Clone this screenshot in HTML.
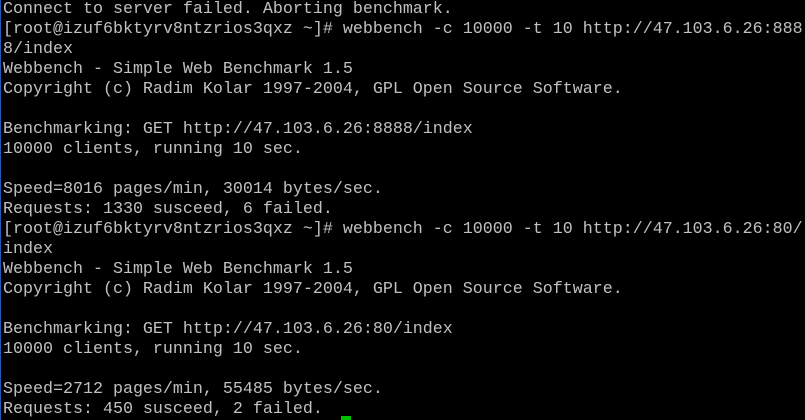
<!DOCTYPE html>
<html><head><style>
html,body{margin:0;padding:0;background:#000;width:805px;height:420px;overflow:hidden}
pre{margin:0;position:absolute;left:3px;top:0px;font-family:"Liberation Mono",monospace;font-size:16.67px;line-height:20px;color:#c0c0c0;white-space:pre}
.edge{position:absolute;left:0;top:0;width:1px;height:420px;background:#1a5fb4}
.cur{position:absolute;left:341px;top:416px;width:10px;height:4px;background:#00c000}
</style></head><body>
<div class="edge"></div>
<pre>Connect to server failed. Aborting benchmark.
[root@izuf6bktyrv8ntzrios3qxz ~]# webbench -c 10000 -t 10 http://47.103.6.26:888
8/index
Webbench - Simple Web Benchmark 1.5
Copyright (c) Radim Kolar 1997-2004, GPL Open Source Software.

Benchmarking: GET http://47.103.6.26:8888/index
10000 clients, running 10 sec.

Speed=8016 pages/min, 30014 bytes/sec.
Requests: 1330 susceed, 6 failed.
[root@izuf6bktyrv8ntzrios3qxz ~]# webbench -c 10000 -t 10 http://47.103.6.26:80/
index
Webbench - Simple Web Benchmark 1.5
Copyright (c) Radim Kolar 1997-2004, GPL Open Source Software.

Benchmarking: GET http://47.103.6.26:80/index
10000 clients, running 10 sec.

Speed=2712 pages/min, 55485 bytes/sec.
Requests: 450 susceed, 2 failed.</pre>
<div class="cur"></div>
</body></html>
